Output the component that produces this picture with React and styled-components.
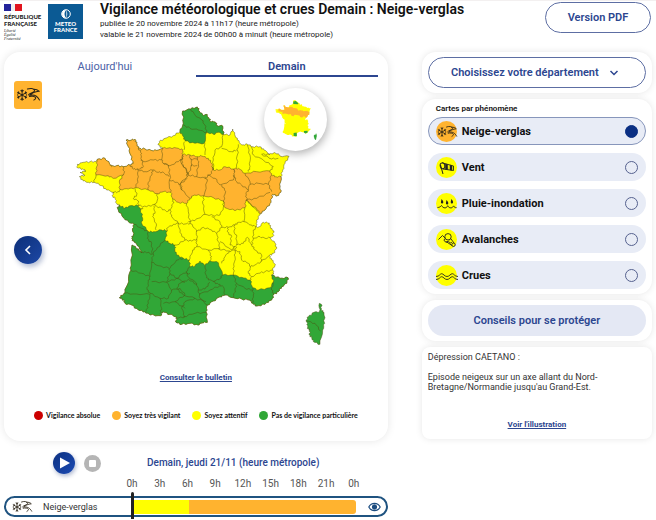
import React, { useState } from "react";
import styled, { createGlobalStyle } from "styled-components";

const GlobalStyle = createGlobalStyle`
  * {
    box-sizing: border-box;
  }

  body {
    margin: 0;
    background: #fff;
    color: #111;
    font-family: Roboto, "Liberation Sans", sans-serif;
  }

  button,
  select {
    font-family: inherit;
  }

  h1,
  h2,
  p {
    margin: 0;
  }
`;

const COLORS = {
  red: "#cc0000",
  orange: "#ffb32f",
  yellow: "#ffff00",
  green: "#31a737",
};

// Map geometry: lists of "x,y" points, three units for one pixel

const FRANCE =
  "338,48 362,42 382,36 388,48 400,62 408,58 416,68 422,80 435,80 442,92 458,93 460,118 480,120 488,102 494,118 502,135 516,150 532,148 548,155 570,155 582,165 600,178 610,174 625,176 630,183 657,184 645,205 638,225 633,245 630,275 632,292 622,302 608,298 605,310 600,325 585,345 570,355 565,368 558,385 562,398 568,395 580,382 598,384 602,400 612,408 608,425 600,428 615,445 620,460 610,475 598,482 605,495 616,508 608,525 612,535 605,540 630,550 654,548 650,565 635,575 625,590 612,598 605,615 590,622 585,628 560,633 548,625 540,615 515,612 490,608 465,600 450,605 430,618 412,630 408,650 412,682 395,682 385,690 360,685 335,688 318,682 320,666 300,658 278,650 272,662 240,660 225,650 205,645 185,630 165,625 162,615 148,608 160,598 172,570 180,530 184,510 186,450 205,462 214,474 208,455 192,441 185,430 190,420 188,400 192,388 175,380 160,368 145,345 142,338 150,332 140,325 135,310 126,302 132,292 110,285 95,272 80,265 72,262 55,262 40,258 28,245 45,240 30,232 48,228 38,222 22,218 22,208 40,202 60,200 78,200 82,193 105,190 118,205 125,215 140,212 160,215 180,210 190,205 182,180 175,155 168,135 180,136 195,133 200,145 205,160 225,162 250,168 270,163 278,160 265,150 268,140 285,130 310,122 330,110 340,85";

const NORTH =
  "338,48 362,42 382,36 388,48 400,62 408,58 416,68 422,80 435,80 442,92 458,93 460,118 445,112 430,118 410,112 403,145 375,145 345,138 340,125 330,110 340,85";

const ORANGE =
  "82,193 105,190 118,205 125,215 140,212 160,215 180,210 190,205 182,180 175,155 168,135 180,136 195,133 200,145 205,160 225,162 250,168 270,163 278,160 300,158 325,160 338,165 338,178 360,180 382,185 395,183 415,190 425,205 430,225 450,225 465,215 490,222 505,220 525,235 560,230 600,228 605,240 618,245 633,245 630,275 632,292 622,302 608,298 605,310 600,325 585,345 570,355 562,345 535,320 528,315 525,338 495,347 465,338 460,318 430,308 400,302 372,300 360,310 350,325 325,322 308,312 302,292 280,290 262,296 235,285 195,278 175,282 150,283 148,258 160,240 130,250 115,242 78,240 80,215";

const SOUTH =
  "142,338 150,332 165,340 180,332 205,332 212,345 218,370 215,385 235,410 250,410 275,405 292,407 285,435 300,445 315,450 315,465 320,480 340,490 358,495 360,515 375,513 390,498 405,512 420,497 445,503 458,540 490,540 515,547 540,555 548,578 565,585 600,578 610,562 605,540 630,550 654,548 650,565 635,575 625,590 612,598 605,615 590,622 585,628 560,633 548,625 540,615 515,612 490,608 465,600 450,605 430,618 412,630 408,650 412,682 395,682 385,690 360,685 335,688 318,682 320,666 300,658 278,650 272,662 240,660 225,650 205,645 185,630 165,625 162,615 148,608 160,598 172,570 180,530 184,510 186,450 205,462 214,474 208,455 192,441 185,430 190,420 188,400 192,388 175,380 160,368 145,345";

const CORSICA =
  "748,625 754,628 754,645 762,652 764,685 758,705 750,748 730,740 725,728 718,720 720,705 712,700 713,685 708,678 715,665 732,652 748,650";

const BORDERS = [
  // Bretagne, Normandie, Pays de la Loire
  "78,240 72,262",
  "160,215 162,235 160,240",
  "150,283 148,290 132,292",
  "180,210 190,222 205,223 218,218 218,200 212,190 215,175 205,160",
  "218,200 250,195 275,195 280,205 295,210 300,240",
  "202,222 205,245 198,278",
  "205,225 225,230 248,225 245,240 235,262 235,285",
  "248,225 265,232 280,232 297,245",
  "278,160 275,195",
  "280,205 300,212 325,200 338,190 338,178",
  "338,190 335,205 350,225 352,245",
  "300,240 298,270 302,292",
  "298,255 320,262 330,268 352,250",
  "330,268 335,285",
  "195,280 200,300 190,310 205,318 205,332 230,335 255,328",
  "262,296 262,315 255,332 275,340 290,350 300,345 310,325 308,312",
  "250,332 255,350 248,365 258,385 258,405",
  "212,345 218,338",
  // Centre, Limousin, Auvergne
  "292,407 290,400 310,388 325,385 305,365 300,345",
  "325,385 345,387 360,385 355,350 350,325",
  "360,385 380,405 380,432 365,438 345,435 330,412 325,385",
  "345,435 320,450 315,450",
  "355,380 362,380 385,370 405,358 398,325 402,302",
  "405,358 430,362 450,360 460,338 460,318",
  "380,410 400,397 425,405 440,415 455,397 450,380 425,365",
  "380,432 380,455 415,465 450,460 445,440 440,415",
  "380,455 368,465 360,490 358,495",
  "415,465 425,485 420,497",
  "445,462 478,468 465,485 455,505",
  "455,397 475,397 495,390 505,382 522,380 525,338",
  "475,397 472,410 485,425 480,450 495,455 485,465 450,440",
  "495,390 492,410 500,425 500,450 495,465",
  "528,315 540,325 562,350",
  "522,380 545,390 558,395 550,410 550,430 545,450",
  "500,450 520,445 532,427 545,450 555,465 575,480 573,500",
  "550,430 570,425 585,430 600,428",
  "573,500 598,482",
  "478,468 495,465 495,485 492,515 490,540",
  "495,468 510,470 515,495 535,505 542,515 535,535 545,545 540,555",
  "573,500 555,510 542,515",
  "545,545 565,535 585,530 608,525",
  // Provence, Languedoc
  "610,562 605,585 612,598",
  "548,578 550,600 548,625",
  "490,540 500,565 525,580 548,585",
  "500,565 495,585 490,608",
  "405,512 408,540 415,555 435,558 450,550 458,540",
  "430,560 445,568 460,575 465,600",
  "360,515 348,530 355,545 380,565 385,585 405,582 420,562",
  "385,585 390,610 412,630",
  "387,598 420,585 450,572",
  "345,620 375,610 408,620",
  "340,665 375,655 408,652",
  "345,620 335,640 345,665 320,670",
  "330,565 355,553 380,568",
  "330,565 320,580 340,600 375,610",
  // Aquitaine, Midi-Pyrenees
  "300,520 320,495 340,490",
  "360,535 340,535 320,550 300,535 298,520 265,512 245,502 250,475 262,458 285,435",
  "192,388 215,400 235,410 232,430 245,445 247,478 225,470 214,474",
  "245,502 240,545 215,535 180,525",
  "240,545 235,560 232,585 240,595 270,610 295,610 305,585 290,562 245,560",
  "290,560 300,535",
  "162,595 200,597 240,598 235,625 228,650",
  "270,610 275,640 270,655",
  "290,562 320,550 345,562",
  "305,585 330,580 345,600 315,620 280,625",
  "315,620 345,640",
  // Hauts-de-France, Grand Est
  "340,90 360,100 385,105 410,112",
  "362,42 375,60 395,75 405,90 410,112",
  "405,145 405,180",
  "460,118 455,155 435,165 430,195 430,225",
  "343,140 342,165",
  "455,160 485,170 500,165",
  "505,148 502,180 500,220",
  "532,150 540,180 540,215 535,230",
  "545,155 550,180 580,195 610,215 600,228",
  "600,178 575,178 605,192 625,190",
  // Ile-de-France, Bourgogne, Franche-Comte
  "382,185 385,205 380,245",
  "338,180 332,200 350,230 355,240 380,245",
  "360,180 365,210 355,240",
  "362,192 382,192",
  "362,212 382,212",
  "380,245 405,250 425,235 428,215",
  "405,245 412,258 402,302",
  "355,240 332,265 335,285 360,310",
  "412,240 435,250 450,270 490,255 495,230 490,222",
  "455,270 467,290 460,318",
  "490,240 500,260 515,270 535,285 540,260 525,235",
  "540,268 565,265 595,268 605,240",
  "595,268 605,290",
  "535,285 528,295 530,315 560,310 600,292",
  "710,678 735,685 752,708",
];

const parse = (points) => points.split(" ").map((p) => p.split(",").map(Number));

// Breaks each side in four with small shifts that depend only on its two ends,
// so that an area and the border it shares stay on the same line.
const rough = (points, closed) => {
  const list = parse(points);
  if (closed) list.push(list[0]);
  const out = [list[0]];
  for (let i = 1; i < list.length; i++) {
    const [ax, ay] = list[i - 1];
    const [bx, by] = list[i];
    const len = Math.hypot(bx - ax, by - ay);
    const flip = ax < bx || (ax === bx && ay < by) ? 1 : -1;
    if (len > 9) {
      [0.25, 0.5, 0.75].forEach((t) => {
        const u = flip === 1 ? t : 1 - t;
        const n = Math.sin((ax + bx) * 12.9 + (ay + by) * 7.3 + u * 41) * 2.4 * flip;
        out.push([
          ax + (bx - ax) * t - ((by - ay) / len) * n,
          ay + (by - ay) * t + ((bx - ax) / len) * n,
        ]);
      });
    }
    out.push([bx, by]);
  }
  return out.map((p) => `${p[0].toFixed(1)},${p[1].toFixed(1)}`).join(" ");
};

const FranceMap = () => (
  <MapSvg viewBox="0 0 810 780" role="img" aria-label="Carte de vigilance">
    <g stroke="#4e4a10" strokeOpacity="0.65" strokeWidth="2.1" strokeLinejoin="round">
      <polygon points={rough(FRANCE, true)} fill={COLORS.yellow} />
      <polygon points={rough(ORANGE, true)} fill={COLORS.orange} />
      <polygon points={rough(NORTH, true)} fill={COLORS.green} />
      <polygon points={rough(SOUTH, true)} fill={COLORS.green} />
      <polygon points={rough(CORSICA, true)} fill={COLORS.green} />
      {BORDERS.map((line) => (
        <polyline key={line} points={rough(line)} fill="none" />
      ))}
    </g>
  </MapSvg>
);

const MiniMap = () => (
  <svg width="63" height="63" viewBox="0 0 63 63" aria-hidden="true">
    <g transform="translate(10 10) scale(0.056)">
      <polygon points={FRANCE} fill={COLORS.yellow} />
      <polygon points={ORANGE} fill={COLORS.orange} />
      <polygon points="345,62 390,55 435,92 425,112 345,105" fill={COLORS.green} />
      <polygon points="350,625 405,615 408,685 350,680" fill={COLORS.green} />
      <polygon points="535,590 600,585 600,615 560,633 535,615" fill={COLORS.green} />
      <polygon points={CORSICA} fill={COLORS.green} />
    </g>
  </svg>
);

const SnowIcon = ({ size = 22 }) => (
  <svg
    width={size}
    height={size}
    viewBox="0 0 22 22"
    fill="none"
    stroke="#2b2417"
    strokeWidth="0.85"
    strokeLinecap="round"
    aria-hidden="true"
  >
    <path d="M6 6.500v9M2.200 8.800l7.600 4.400M2.200 13.200l7.600-4.400M5 7.200l1 .9 1-.9M5 14.800l1-.9 1 .9M2.200 10.300l1.200-.7-.3-1.300M9.800 11.700l-1.200.7.3 1.300M2.200 11.700l1.200.7-.3 1.300M9.800 10.300l-1.200-.7.3-1.300" />
    <path d="M10.500 6c2.500-1 5.500-.6 6 1 .2.800-.6 1.400-1.700 1.900C13.300 9.600 12 10 11.500 10.800M15.500 6.200c1.800-.2 3.700.5 4.800 1.600-3 .3-6 1.400-7.800 3.400 3.300-.8 6.500.6 8.200 4M12.200 12.200c2-.6 4.600 0 5.300 1.200.3.900-.9 1.300-1.600 1.900" />
  </svg>
);

const WindIcon = () => (
  <svg width="22" height="22" viewBox="0 0 22 22" fill="none" stroke="#222" aria-hidden="true">
    <path d="M7 17 4.500 8" strokeWidth="1" />
    <ellipse cx="6.500" cy="8.800" rx="2.300" ry="3" transform="rotate(-12 6.500 8.800)" />
    <path d="M6 5.800 17.500 9v4.500L7 12" strokeWidth="0.9" />
    <path d="M9.300 7 11.500 7.500l.3 5L9.500 12.200zM14 8.200l2 .5v4.500l-2-.3z" fill="#222" strokeWidth="0.5" />
  </svg>
);

const RainIcon = () => (
  <svg width="22" height="22" viewBox="0 0 22 22" fill="none" stroke="#222" aria-hidden="true">
    <path
      d="M1.500 14.500c2 0 3-.8 4-2 1 1.600 2 2.400 3.500 2.400s2-1 2.700-2.200c.8 1.500 1.800 2.200 3.200 2.200s2-1 2.700-2c.6 1.300 1.400 1.800 3 1.800"
      strokeWidth="0.9"
    />
    <path d="M5.500 6c1.300 1.400 1.800 2.300 1.800 3.200a1.200 1.200 0 0 1-2.400 0zM10.500 7c1.300 1.400 1.800 2.300 1.800 3.200a1.200 1.200 0 0 1-2.400 0zM15.300 6c1.300 1.400 1.800 2.300 1.800 3.200a1.200 1.200 0 0 1-2.400 0z" fill="#222" stroke="none" />
  </svg>
);

const AvalancheIcon = () => (
  <svg width="22" height="22" viewBox="0 0 22 22" fill="none" stroke="#222" strokeWidth="0.9" aria-hidden="true">
    <path d="M2.500 10.500 6.500 6.500 9 9M10 12.500l6 4" />
    <circle cx="12" cy="7.800" r="3.200" />
    <path d="M9 9.500a2 2 0 1 0 3 2.500M13 11.500a1.600 1.600 0 1 0 2.800 1.500" />
    <circle cx="17.500" cy="15.800" r="1.700" />
    <path d="M14.800 9.700 18 14" />
  </svg>
);

const FloodIcon = () => (
  <svg width="22" height="22" viewBox="0 0 22 22" fill="none" stroke="#222" strokeWidth="0.9" aria-hidden="true">
    <path d="M0 11.500c3.500 0 4-2.800 5.700-2.800S8.500 11.500 11 11.500s3.500-2.800 5.300-2.800S18.500 11.500 22 11.500" />
    <path d="M0 14.500c3.500 0 4-2.800 5.700-2.800S8.500 14.500 11 14.500s3.500-2.800 5.300-2.800S18.500 14.500 22 14.500" />
  </svg>
);

const EyeIcon = () => (
  <svg width="13" height="10" viewBox="0 0 13 10" fill="none" stroke="#1b4c80" aria-hidden="true">
    <path d="M.8 5C3.500.2 9.500.2 12.200 5 9.500 9.800 3.500 9.800.8 5z" strokeWidth="1.200" />
    <circle cx="6.500" cy="5" r="2.200" fill="#1b4c80" />
  </svg>
);

const phenomena = [
  { id: "neige", label: "Neige-verglas", color: COLORS.orange, Icon: SnowIcon },
  { id: "vent", label: "Vent", color: COLORS.yellow, Icon: WindIcon },
  { id: "pluie", label: "Pluie-inondation", color: COLORS.yellow, Icon: RainIcon },
  { id: "avalanches", label: "Avalanches", color: COLORS.yellow, Icon: AvalancheIcon },
  { id: "crues", label: "Crues", color: COLORS.yellow, Icon: FloodIcon },
];

const legend = [
  { label: "Vigilance absolue", color: COLORS.red },
  { label: "Soyez très vigilant", color: COLORS.orange },
  { label: "Soyez attentif", color: COLORS.yellow },
  { label: "Pas de vigilance particulière", color: COLORS.green },
];

const hours = ["0h", "3h", "6h", "9h", "12h", "15h", "18h", "21h", "0h"];

const App = () => {
  const [day, setDay] = useState("demain");
  const [phenomenon, setPhenomenon] = useState("neige");

  return (
    <Page>
      <GlobalStyle />
      <Header>
        <Republic>
          <svg width="18" height="7" viewBox="0 0 18 7" aria-hidden="true">
            <path d="M0 0h7v7H0z" fill="#23239a" />
            <path d="M11 0h7v7h-7z" fill="#e1141e" />
            <path d="M7 0h4v7H7z" fill="#eee" />
          </svg>
          <strong>
            RÉPUBLIQUE
            <br />
            FRANÇAISE
          </strong>
          <em>
            Liberté
            <br />
            Égalité
            <br />
            Fraternité
          </em>
        </Republic>
        <MeteoLogo>
          <svg width="10" height="10" viewBox="0 0 10 10" aria-hidden="true">
            <circle cx="5" cy="5" r="4.300" fill="none" stroke="#fff" />
            <path d="M5 1a4 4 0 0 0 0 8c-2-2.500-2-5.500 0-8z" fill="#fff" />
            <path d="M5 1v8c1.800-2.500 1.800-5.500 0-8z" fill="#fff" opacity=".6" />
          </svg>
          METEO
          <br />
          FRANCE
        </MeteoLogo>
        <Heading>
          <h1>Vigilance météorologique et crues Demain : Neige-verglas</h1>
          <p>publiée le 20 novembre 2024 à 11h17 (heure métropole)</p>
          <p>valable le 21 novembre 2024 de 00h00 à minuit (heure métropole)</p>
        </Heading>
        <PdfButton type="button">Version PDF</PdfButton>
      </Header>

      <Columns>
        <main>
          <MapPanel>
            <Tabs role="tablist">
              <Tab
                type="button"
                role="tab"
                aria-selected={day === "aujourdhui"}
                $active={day === "aujourdhui"}
                onClick={() => setDay("aujourdhui")}
              >
                Aujourd'hui
              </Tab>
              <Tab
                type="button"
                role="tab"
                aria-selected={day === "demain"}
                $active={day === "demain"}
                onClick={() => setDay("demain")}
              >
                Demain
              </Tab>
            </Tabs>
            <MapArea>
              <MapSide>
                <PhenomenonBadge>
                  <SnowIcon size={26} />
                </PhenomenonBadge>
                <PrevButton type="button" aria-label="Carte précédente">
                  <svg width="10" height="12" viewBox="0 0 10 12" aria-hidden="true">
                    <path d="M7 2 3 6l4 4" fill="none" stroke="#fff" strokeWidth="1.600" />
                  </svg>
                </PrevButton>
              </MapSide>
              <MapFrame>
                <FranceMap />
                <MiniMapButton type="button" aria-label="Autre carte">
                  <MiniMap />
                </MiniMapButton>
              </MapFrame>
            </MapArea>
            <TextLink href="#bulletin">Consulter le bulletin</TextLink>
            <Legend>
              {legend.map((item) => (
                <LegendItem key={item.label} $color={item.color}>
                  {item.label}
                </LegendItem>
              ))}
            </Legend>
          </MapPanel>

          <Player>
            <PlayButton type="button" aria-label="Lecture">
              <svg width="10" height="12" viewBox="0 0 10 12" aria-hidden="true">
                <path d="M0 0.500v11L10 6z" fill="#fff" />
              </svg>
            </PlayButton>
            <StopButton type="button" aria-label="Arrêt" />
            <h2>Demain, jeudi 21/11 (heure métropole)</h2>
          </Player>
          <Hours>
            {hours.map((hour, i) => (
              <span key={i}>{hour}</span>
            ))}
          </Hours>
          <Timeline>
            <TimelineLabel>
              <SnowIcon />
              Neige-verglas
            </TimelineLabel>
            <Track>
              <Segment $span={1} $color={COLORS.yellow} />
              <Segment $span={3} $color={COLORS.orange} />
              <Cursor />
            </Track>
            <EyeButton type="button" aria-label="Afficher">
              <EyeIcon />
            </EyeButton>
          </Timeline>
        </main>

        <Sidebar>
          <Card>
            <SelectBox>
              <select aria-label="Département" defaultValue="">
                <option value="">Choisissez votre département</option>
              </select>
              <svg width="10" height="8" viewBox="0 0 10 8" aria-hidden="true">
                <path d="M1.500 2 5 5.500 8.500 2" fill="none" stroke="#2c4690" strokeWidth="1.500" />
              </svg>
            </SelectBox>
          </Card>

          <Card>
            <Phenomena>
              <legend>Cartes par phénomène</legend>
              {phenomena.map(({ id, label, color, Icon }) => (
                <Option key={id} $active={phenomenon === id}>
                  <OptionIcon $color={color}>
                    <Icon />
                  </OptionIcon>
                  <span>{label}</span>
                  <input
                    type="radio"
                    name="phenomenon"
                    value={id}
                    checked={phenomenon === id}
                    onChange={() => setPhenomenon(id)}
                  />
                </Option>
              ))}
            </Phenomena>
          </Card>

          <Card>
            <AdviceButton type="button">Conseils pour se protéger</AdviceButton>
          </Card>

          <Comment>
            <p>Dépression CAETANO :</p>
            <p>Episode neigeux sur un axe allant du Nord-Bretagne/Normandie jusqu'au Grand-Est.</p>
            <TextLink href="#illustration">Voir l'illustration</TextLink>
          </Comment>
        </Sidebar>
      </Columns>
    </Page>
  );
};

export default App;

const Page = styled.div`
  padding: 0 4px;
  border-top: 1px solid #f3f0f0;
`;

const Header = styled.header`
  display: flex;
  align-items: flex-start;
  min-height: 51px;
`;

const Republic = styled.div`
  display: flex;
  flex-direction: column;
  width: 44px;
  padding-top: 3px;
  color: #1e1e1e;

  strong {
    margin-top: 2px;
    font: 900 6px/7px Lato, sans-serif;
  }

  em {
    margin-top: 2px;
    font: italic 4px/4px "Liberation Serif", serif;
  }
`;

const MeteoLogo = styled.div`
  width: 35px;
  height: 35px;
  margin-top: 3px;
  padding-top: 5px;
  background: #0b5a94;
  color: #fff;
  font: 900 6px/6px Lato, sans-serif;
  text-align: center;

  svg {
    display: block;
    margin: 0 auto 2px;
  }
`;

const Heading = styled.div`
  flex: 1;
  padding-left: 17px;
  white-space: nowrap;

  h1 {
    font-size: 14px;
    font-weight: 600;
    line-height: 17px;
  }

  p {
    color: #222;
    font-size: 8px;
    line-height: 11px;
  }
`;

const PdfButton = styled.button`
  width: 106px;
  height: 31px;
  margin-top: 1px;
  margin-right: 1px;
  border: 1px solid #5d6ea3;
  border-radius: 16px;
  background: #fff;
  color: #2c4690;
  font-size: 11px;
  font-weight: 600;
`;

const Columns = styled.div`
  display: grid;
  grid-template-columns: minmax(0, 5fr) minmax(0, 3fr);
  column-gap: 34px;
  align-items: start;
`;

const Card = styled.section`
  padding: 5px 6px;
  border-radius: 14px;
  background: #fff;
  box-shadow: 0 0 7px rgba(0, 0, 0, 0.1);
`;

const MapPanel = styled.section`
  display: flex;
  flex-direction: column;
  align-items: center;
  padding: 0 10px 21px;
  border-radius: 16px;
  background: #fff;
  box-shadow: 0 0 8px rgba(0, 0, 0, 0.1);
`;

const Tabs = styled.div`
  display: flex;
  align-self: stretch;
`;

const Tab = styled.button`
  flex: 1;
  height: 25px;
  padding: 6px 0 0;
  border: 0;
  border-bottom: 2px solid ${(props) => (props.$active ? "#2c4690" : "transparent")};
  background: none;
  color: ${(props) => (props.$active ? "#2c4690" : "#4c62a6")};
  font-size: 11px;
  font-weight: ${(props) => (props.$active ? 600 : 400)};
`;

const MapArea = styled.div`
  display: flex;
  align-self: stretch;
  padding-top: 4px;
`;

const MapSide = styled.div`
  display: flex;
  flex: 0 0 56px;
  flex-direction: column;
  gap: 127px;
`;

const PhenomenonBadge = styled.div`
  display: grid;
  place-items: center;
  width: 28px;
  height: 28px;
  border-radius: 3px;
  background: ${COLORS.orange};
`;

const RoundButton = styled.button`
  display: grid;
  place-items: center;
  padding: 0;
  border: 0;
  border-radius: 50%;
`;

const PrevButton = styled(RoundButton)`
  width: 28px;
  height: 28px;
  background: linear-gradient(135deg, #0c2f78, #1d48a6);
  box-shadow: 2px 3px 5px rgba(20, 50, 120, 0.3);
`;

const MapFrame = styled.div`
  position: relative;
  flex: 0 1 270px;
  padding-top: 14px;
`;

const MapSvg = styled.svg`
  display: block;
  width: 100%;
  height: auto;
`;

const MiniMapButton = styled(RoundButton)`
  position: absolute;
  top: 7px;
  right: 13px;
  background: #fff;
  box-shadow: 1px 3px 8px rgba(0, 0, 0, 0.3);
`;

const TextLink = styled.a`
  align-self: center;
  margin-top: 17px;
  color: #2c4690;
  font-size: 8px;
  font-weight: 700;
  line-height: 12px;
`;

const Legend = styled.ul`
  display: flex;
  flex-wrap: wrap;
  gap: 4px 12px;
  margin: 26px 0 0;
  padding: 0;
  list-style: none;
`;

const LegendItem = styled.li`
  display: flex;
  align-items: center;
  gap: 3px;
  font: 700 7px/10px Lato, sans-serif;

  &::before {
    content: "";
    width: 9px;
    height: 9px;
    border-radius: 50%;
    background: ${(props) => props.$color};
  }
`;

const Player = styled.div`
  display: flex;
  align-items: center;
  padding: 11px 0 0 49px;

  h2 {
    margin-left: 46px;
    color: #2c4690;
    font-size: 10px;
    font-weight: 500;
    line-height: 12px;
  }
`;

const PlayButton = styled(RoundButton)`
  width: 22px;
  height: 22px;
  padding-left: 2px;
  background: linear-gradient(135deg, #0c3080, #1c4bb4);
  box-shadow: 1px 2px 4px rgba(20, 50, 120, 0.35);
`;

const StopButton = styled(RoundButton)`
  width: 17px;
  height: 17px;
  margin-left: 9px;
  background: #b5b5b5;

  &::before {
    content: "";
    width: 7px;
    height: 7px;
    border-radius: 1px;
    background: #fff;
  }
`;

const Hours = styled.div`
  display: flex;
  justify-content: space-between;
  margin: 4px 34px 0 128px;
  color: #555;
  font-size: 10px;
  line-height: 12px;

  span {
    display: flex;
    justify-content: center;
    width: 0;
  }
`;

const Timeline = styled.div`
  display: grid;
  grid-template-columns: 127px 1fr 30px;
  align-items: center;
  height: 21px;
  margin: 6px 0 2px;
  border: 2px solid #1f5380;
  border-radius: 11px;
`;

const TimelineLabel = styled.div`
  display: flex;
  align-items: center;
  gap: 10px;
  height: 17px;
  padding-left: 5px;
  color: #333;
  font-size: 9px;
`;

const Track = styled.div`
  position: relative;
  display: flex;
  height: 14px;
`;

const Segment = styled.div`
  flex: ${(props) => props.$span};
  background: ${(props) => props.$color};

  &:nth-child(2) {
    border-radius: 0 3px 3px 0;
  }
`;

const Cursor = styled.div`
  position: absolute;
  top: -8px;
  bottom: -6px;
  left: -2px;
  width: 3px;
  border-radius: 2px;
  background: #222;
`;

const EyeButton = styled.button`
  display: grid;
  place-items: center;
  padding: 0 0 0 8px;
  border: 0;
  background: none;
`;

const Sidebar = styled.aside`
  display: flex;
  flex-direction: column;
  gap: 6px;
`;

const SelectBox = styled.div`
  position: relative;

  select {
    display: block;
    width: 100%;
    height: 31px;
    padding: 0 24px 0 0;
    border: 1px solid #5d6ea3;
    border-radius: 16px;
    appearance: none;
    background: #fff;
    color: #2c4690;
    font-size: 11px;
    font-weight: 600;
    text-align-last: center;
  }

  svg {
    position: absolute;
    top: 12px;
    right: 27px;
    pointer-events: none;
  }
`;

const Phenomena = styled.fieldset`
  display: flex;
  flex-direction: column;
  gap: 8px;
  min-width: 0;
  margin: 0;
  padding: 0;
  border: 0;

  legend {
    margin-bottom: 3px;
    padding: 0 8px;
    font-size: 8px;
    font-weight: 600;
    line-height: 10px;
  }
`;

const Option = styled.label`
  display: flex;
  align-items: center;
  gap: 5px;
  height: 28px;
  padding: 0 7px;
  border: 1px solid ${(props) => (props.$active ? "#8796bb" : "transparent")};
  border-radius: 14px;
  background: #e8ecf6;
  background-clip: border-box;
  font-size: 11px;
  font-weight: 700;

  span {
    flex: 1;
  }

  input {
    width: 13px;
    height: 13px;
    margin: 0;
    border: 1px solid #56628f;
    border-radius: 50%;
    appearance: none;
  }

  input:checked {
    border-color: #0a2f83;
    background: #0a2f83;
  }
`;

const OptionIcon = styled.div`
  display: grid;
  place-items: center;
  width: 21px;
  height: 21px;
  border-radius: 50%;
  background: ${(props) => props.$color};
`;

const AdviceButton = styled.button`
  width: 100%;
  height: 31px;
  border: 0;
  border-radius: 16px;
  background: #e4e8f4;
  color: #2c4690;
  font-size: 11px;
  font-weight: 600;
`;

const Comment = styled(Card)`
  display: flex;
  flex-direction: column;
  border-radius: 8px;
  color: #333;
  font-size: 9px;
  line-height: 10px;

  p + p {
    margin-top: 10px;
  }

  ${TextLink} {
    margin-top: 27px;
    margin-bottom: 3px;
  }
`;
